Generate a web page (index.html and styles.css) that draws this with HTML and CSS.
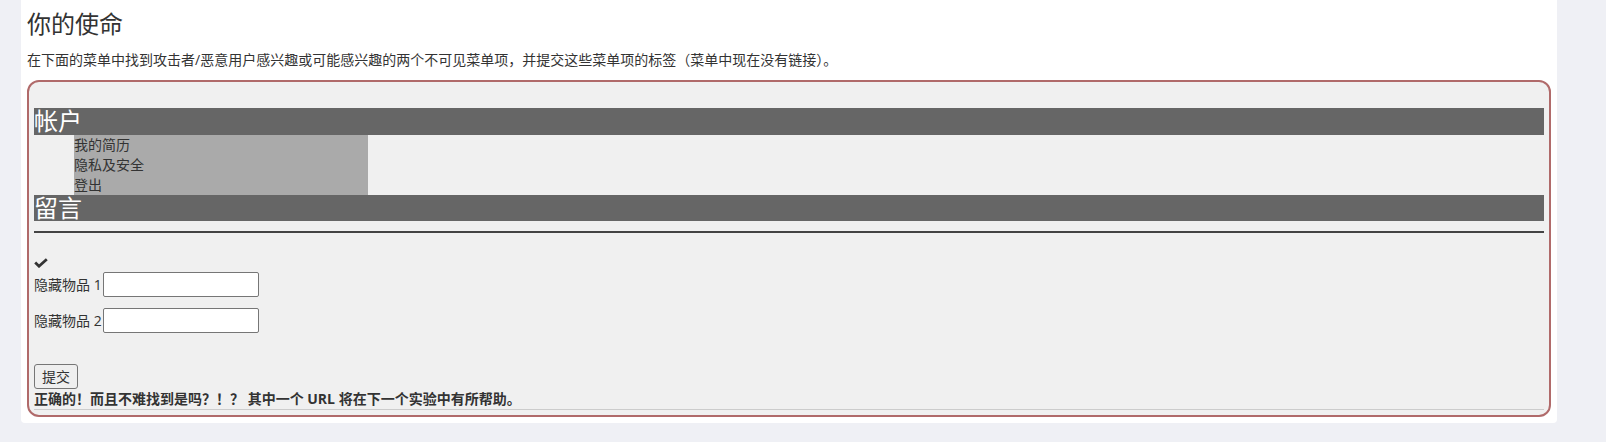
FILE: index.html
```html
<!DOCTYPE html>
<html lang="zh-CN">
<head>
<meta charset="utf-8">
<title>你的使命</title>
<link rel="stylesheet" href="styles.css">
</head>
<body>
<div class="panel">
  <h1 class="title">你的使命</h1>
  <p class="intro">在下面的菜单中找到攻击者/恶意用户感兴趣或可能感兴趣的两个不可见菜单项，并提交这些菜单项的标签（菜单中现在没有链接）。</p>
  <div class="attack-box">
    <div class="menu">
      <div class="menu-header">帐户</div>
      <ul class="submenu">
        <li>我的简历</li>
        <li>隐私及安全</li>
        <li>登出</li>
      </ul>
      <div class="menu-header">留言</div>
    </div>
    <hr class="rule">
    <form class="attack-form">
      <svg class="check" width="14" height="10" viewBox="0 0 14 10" aria-hidden="true">
        <path d="M1.2 4.6 L5 8.2 L12.8 1.2" fill="none" stroke="#333" stroke-width="2.8" stroke-linejoin="miter" stroke-linecap="butt"/>
      </svg>
      <div class="field">
        <label>隐藏物品 1</label>
        <input type="text" class="text-input">
      </div>
      <div class="field">
        <label>隐藏物品 2</label>
        <input type="text" class="text-input">
      </div>
      <button type="button" class="submit">提交</button>
    </form>
    <div class="feedback">正确的！而且不难找到是吗？！？ 其中一个 URL 将在下一个实验中有所帮助。</div>
    <hr class="thin-rule">
  </div>
</div>
</body>
</html>
```

FILE: styles.css
```css
* {
  box-sizing: border-box;
}

html, body {
  margin: 0;
  padding: 0;
}

body {
  background: #eff0f5;
  font-family: "Open Sans", "Noto Sans CJK SC", sans-serif;
  color: #333;
  font-size: 14px;
}

.panel {
  margin-left: 21px;
  width: 1536px;
  padding: 0 6px 6px;
  background: #fff;
  border-radius: 0 0 4px 4px;
}

.title {
  margin: 0;
  padding-top: 8px;
  font-size: 24px;
  line-height: 32px;
  font-weight: 400;
  color: #333;
}

.intro {
  margin: 10px 0 0;
  font-size: 14px;
  line-height: 20px;
}

.attack-box {
  margin-top: 10px;
  border: 2px solid #b06a6a;
  border-radius: 12px;
  background: #f0f0f0;
  padding: 26px 5px 5px;
}

.menu-header {
  background: #666;
  color: #fff;
  font-size: 24px;
  line-height: 26.5px;
}

.submenu {
  list-style: none;
  margin: 0 0 0 40px;
  padding: 0;
  width: 294px;
  background: #aaa;
}

.submenu li {
  font-size: 14px;
  line-height: 20px;
  color: #333;
}

.rule {
  margin: 10px 0 0;
  border: 0;
  border-top: 2px solid #444;
  height: 0;
}

.attack-form {
  display: flex;
  flex-direction: column;
  align-items: flex-start;
}

.check {
  display: block;
  margin: 25px 0 4px;
}

.field {
  display: flex;
  align-items: center;
  margin-bottom: 11px;
}

.field label {
  font-size: 14px;
  line-height: 20px;
  white-space: pre;
}

.text-input {
  width: 156px;
  height: 25px;
  margin: 0 0 0 1px;
  border: 1px solid #767676;
  border-radius: 2px;
  background: #fff;
  padding: 1px 2px;
  font: inherit;
}

.submit {
  margin-top: 20px;
  width: 44px;
  height: 25px;
  padding: 0;
  border: 1px solid #767676;
  border-radius: 3px;
  background: #efefef;
  color: #333;
  font-family: "Open Sans", "Noto Sans CJK SC", sans-serif;
  font-size: 14px;
  line-height: 21px;
}

.feedback {
  font-size: 14px;
  line-height: 20px;
  font-weight: 700;
}

.thin-rule {
  margin: 0;
  border: 0;
  border-top: 1px solid #ccc;
  height: 0;
}
```
